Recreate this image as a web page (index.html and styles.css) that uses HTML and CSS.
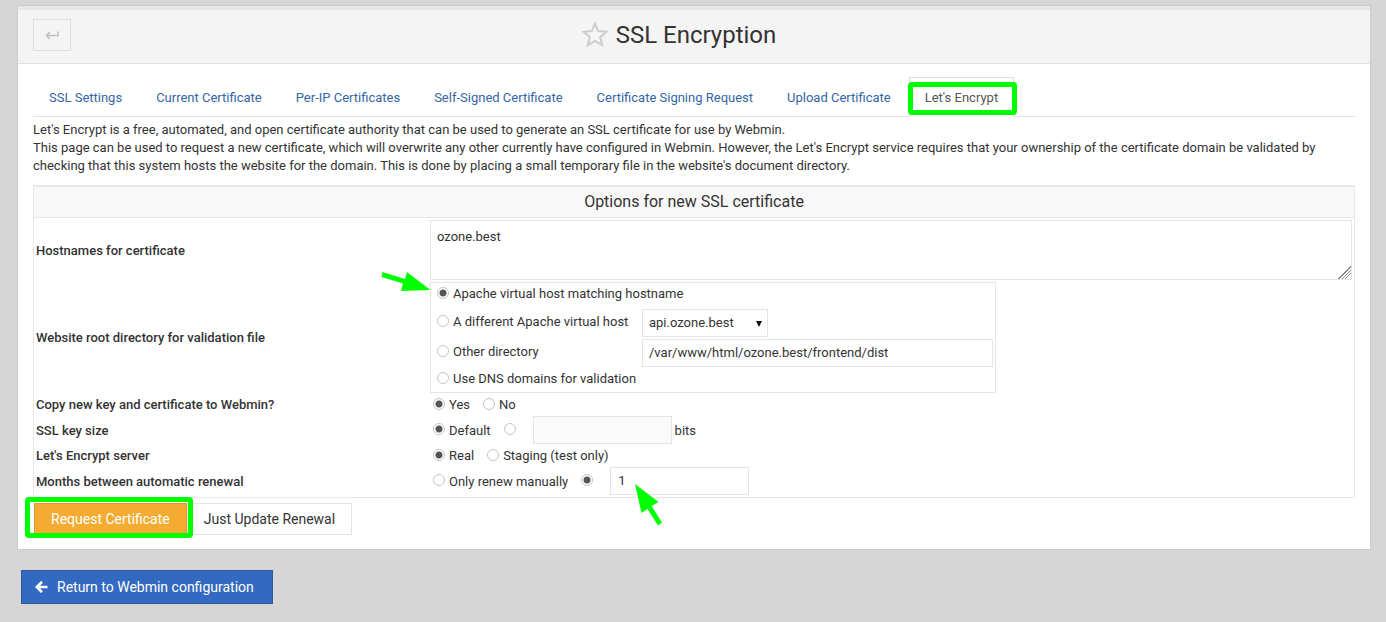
FILE: index.html
```html
<!DOCTYPE html>
<html lang="en">
<head>
<meta charset="utf-8">
<title>SSL Encryption</title>
<link rel="stylesheet" href="styles.css">
</head>
<body>
<main class="panel">
  <header class="panel-head">
    <button class="back" type="button" aria-label="Back">
      <svg width="16" height="12" viewBox="0 0 16 12"><path d="M14 2.500V6.500H2M6 3L2.500 6.500L6 10" fill="none" stroke="#c0c0c0" stroke-width="1.500"/></svg>
    </button>
    <h1 class="title">
      <svg width="26" height="26" viewBox="0 0 26 26"><path d="M13 1.500L16.200 9.100L24.500 9.800L18.200 15.200L20.200 23.200L13 18.900L5.800 23.200L7.800 15.200L1.500 9.800L9.800 9.100Z" fill="none" stroke="#cdcdcd" stroke-width="2"/></svg>
      <span>SSL Encryption</span>
    </h1>
  </header>
  <div class="panel-body">
    <nav class="tabs">
      <a class="tab" href="#">SSL Settings</a>
      <a class="tab" href="#">Current Certificate</a>
      <a class="tab" href="#">Per-IP Certificates</a>
      <a class="tab" href="#">Self-Signed Certificate</a>
      <a class="tab" href="#">Certificate Signing Request</a>
      <a class="tab" href="#">Upload Certificate</a>
      <a class="tab active" href="#">Let's Encrypt<span class="mark mark-tab"></span></a>
    </nav>
    <p class="intro">Let's Encrypt is a free, automated, and open certificate authority that can be used to generate an SSL certificate for use by Webmin.<br>This page can be used to request a new certificate, which will overwrite any other currently have configured in Webmin. However, the Let's Encrypt service requires that your ownership of the certificate domain be validated by checking that this system hosts the website for the domain. This is done by placing a small temporary file in the website's document directory.</p>
    <form class="form">
      <section class="options">
        <h2 class="options-title">Options for new SSL certificate</h2>
        <div class="rows">
          <div class="row">
            <label class="name" for="hosts">Hostnames for certificate</label>
            <textarea class="field hosts" id="hosts">ozone.best</textarea>
          </div>
          <div class="row">
            <span class="name">Website root directory for validation file</span>
            <div class="roots">
              <label class="choice wide"><input type="radio" name="root" checked>Apache virtual host matching hostname</label>
              <label class="choice raised"><input type="radio" name="root">A different Apache virtual host</label>
              <span class="select-wrap"><select class="field" aria-label="Virtual host"><option>api.ozone.best</option></select></span>
              <label class="choice raised"><input type="radio" name="root">Other directory</label>
              <input class="field" type="text" aria-label="Directory" value="/var/www/html/ozone.best/frontend/dist">
              <label class="choice wide"><input type="radio" name="root">Use DNS domains for validation</label>
              <svg class="arrow arrow-root" width="50" height="22" viewBox="0 0 50 22"><path d="M1.500 1L24 8L26 1L49.500 19L20 20L22 12.500L.5 6Z" fill="#0f0"/></svg>
            </div>
          </div>
          <div class="row">
            <span class="name">Copy new key and certificate to Webmin?</span>
            <div class="choices">
              <label class="choice"><input type="radio" name="copy" checked>Yes</label>
              <label class="choice"><input type="radio" name="copy">No</label>
            </div>
          </div>
          <div class="row">
            <span class="name">SSL key size</span>
            <div class="choices">
              <label class="choice"><input type="radio" name="size" checked>Default</label>
              <label class="choice"><input type="radio" name="size" aria-label="Custom size"></label>
              <span class="amount"><input class="field short" id="bits" type="text" disabled><label for="bits">bits</label></span>
            </div>
          </div>
          <div class="row">
            <span class="name">Let's Encrypt server</span>
            <div class="choices">
              <label class="choice"><input type="radio" name="server" checked>Real</label>
              <label class="choice"><input type="radio" name="server">Staging (test only)</label>
            </div>
          </div>
          <div class="row">
            <span class="name">Months between automatic renewal</span>
            <div class="choices">
              <label class="choice"><input type="radio" name="renew">Only renew manually</label>
              <label class="choice"><input type="radio" name="renew" aria-label="Renew every" checked></label>
              <span class="amount"><input class="field short" type="text" aria-label="Months" value="1">
                <svg class="arrow arrow-months" width="28" height="42" viewBox="0 0 28 42"><path d="M0 0L23.500 18L16.500 22L27 38.500L23 41.500L12.500 25L6.500 29Z" fill="#0f0"/></svg>
              </span>
            </div>
          </div>
        </div>
      </section>
      <div class="actions">
        <span class="marked"><button class="btn btn-warn" type="submit">Request Certificate</button><span class="mark mark-btn"></span></span>
        <button class="btn" type="button">Just Update Renewal</button>
      </div>
    </form>
  </div>
</main>
<a class="return" href="#">
  <svg width="13" height="12" viewBox="0 0 13 12"><path d="M7 .8L1.800 6L7 11.200M2 6H12.500" fill="none" stroke="#fff" stroke-width="2.600"/></svg>
  Return to Webmin configuration
</a>
</body>
</html>
```
FILE: styles.css
```css
* { box-sizing: border-box; }
body {
  margin: 0;
  padding: 6px 16px 18px 18px;
  background: #d6d6d6;
  color: #333;
  font: 13px/19px Roboto, sans-serif;
}
button, input, select, textarea { font: inherit; color: inherit; margin: 0; }
.panel {
  background: #fff;
  border-top: 4px solid #e6e6e6;
  box-shadow: 0 0 1px 1px #ccc;
}
.panel-head {
  display: grid;
  grid-template-columns: 1fr auto 1fr;
  align-items: center;
  height: 54px;
  padding: 0 45px 4px 15px;
  background: #f4f4f4;
  border-bottom: 1px solid #e1e1e1;
}
.back {
  display: flex;
  align-items: center;
  justify-content: center;
  width: 38px;
  height: 32px;
  padding: 0;
  background: #f4f4f4;
  border: 1px solid #ddd;
}
.title {
  display: flex;
  align-items: center;
  gap: 8px;
  margin: 0;
  font-size: 24px;
  font-weight: 400;
  line-height: 32px;
}
.panel-body { padding: 13px 15px 14px; }
.tabs { display: flex; gap: 2px; border-bottom: 1px solid #e4e4e4; }
.tab {
  position: relative;
  padding: 10px 15px;
  margin-bottom: -1px;
  border: 1px solid transparent;
  border-bottom: 0;
  color: #3366a5;
  text-decoration: none;
}
.tab.active { color: #555; background: #fff; border-color: #ddd; }
.mark {
  position: absolute;
  border: 5px solid #0f0;
  border-radius: 4px;
  pointer-events: none;
}
.mark-tab { inset: 4px -4px 2px -2px; }
.intro { margin: 4px 0 10px; line-height: 18px; }
.options { border: 1px solid #e7e7e7; border-top-width: 2px; }
.options-title {
  margin: 0;
  background: #f8f8f8;
  border-bottom: 1px solid #e7e7e7;
  font-size: 16px;
  font-weight: 400;
  line-height: 30px;
  text-align: center;
}
.rows { display: flex; flex-direction: column; gap: 2px; padding: 2px; }
.row { display: grid; grid-template-columns: 394px 1fr; align-items: center; }
.name { font-weight: 500; }
.field {
  width: 100%;
  height: 28px;
  padding: 0 6px 2px;
  background: #fff;
  border: 1px solid #e5e5e5;
  border-radius: 0;
}
.hosts { display: block; height: 60px; padding: 6px; resize: both; }
.hosts::-webkit-resizer {
  background: linear-gradient(135deg,
    #fff 0 56%, #888 56% 61%, #fff 61% 67%, #888 67% 72%,
    #fff 72% 78%, #888 78% 83%, #fff 83% 100%);
}
.short { width: 139px; padding: 0 7px 2px; }
.field:disabled { background: #fafafa; }
select.field { appearance: none; }
.select-wrap { position: relative; width: 126px; }
.select-wrap::after {
  content: "";
  position: absolute;
  right: 6px;
  top: 12px;
  border: 3px solid transparent;
  border-top: 6px solid #111;
  border-bottom: 0;
  pointer-events: none;
}
.roots {
  position: relative;
  display: grid;
  grid-template-columns: 207px 1fr;
  grid-template-rows: 23px 28px 28px 21px;
  gap: 2px;
  width: 566px;
  padding: 1px 2px 2px;
  border: 1px solid #e5e5e5;
}
.roots .choice { padding-left: 4px; }
.raised { padding-bottom: 3px; }
.wide { grid-column: 1 / -1; align-self: start; }
.choices { display: flex; align-items: center; gap: 13px; padding-left: 3px; }
.choice { display: flex; align-items: center; gap: 4px; }
.choice input {
  appearance: none;
  width: 12px;
  height: 12px;
  margin-bottom: 2px;
  border: 1px solid #c4c4c4;
  border-radius: 50%;
  background: #fff;
}
.choice input:checked { background: radial-gradient(circle, #555 3px, #fff 4px); }
.amount { position: relative; display: flex; align-items: center; gap: 3px; margin-left: 4px; }
.arrow { position: absolute; pointer-events: none; }
.arrow-root { left: -50px; top: -12px; }
.arrow-months { left: 25px; top: 17px; }
.actions { display: flex; padding-top: 5px; }
.marked { position: relative; display: flex; padding-left: 1px; }
.btn {
  height: 32px;
  padding: 0 16px;
  background: #fff;
  border: 1px solid #e5e5e5;
  font-size: 14px;
}
.btn-warn { color: #fff; background: #f4ab32; border-color: #dc992c; }
.mark-btn { inset: -6px -6px -3px -8px; }
.return {
  display: inline-flex;
  align-items: center;
  gap: 9px;
  height: 34px;
  margin: 21px 0 0 3px;
  padding: 0 18px 0 13px;
  background: #3369c0;
  border: 1px solid #2a5b98;
  color: #fff;
  font-size: 14px;
  text-decoration: none;
}
```
